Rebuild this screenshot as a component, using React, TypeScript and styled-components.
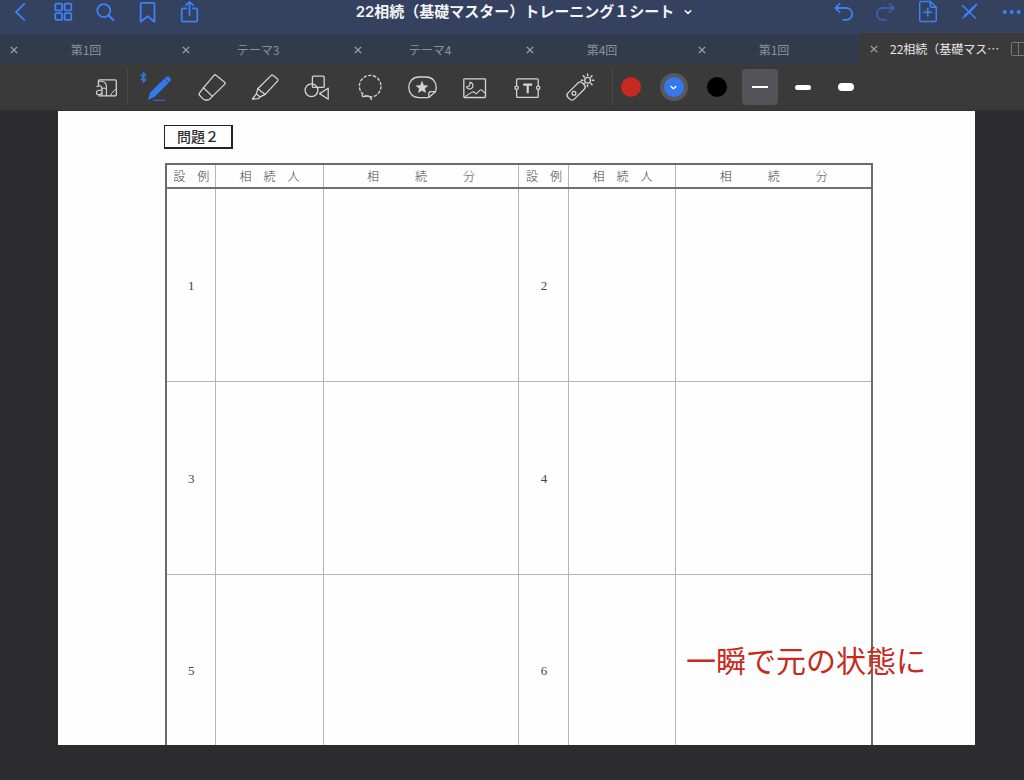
import React from 'react';
import styled, { createGlobalStyle, css } from 'styled-components';

const GlobalStyle = createGlobalStyle`
  * { box-sizing: border-box; }
  body {
    margin: 0;
    background: #2c2c2e;
    font-family: "Noto Sans CJK JP", sans-serif;
  }
  button {
    margin: 0;
    padding: 0;
    border: 0;
    background: none;
    color: inherit;
    font: inherit;
    cursor: pointer;
  }
`;

const Shell = styled.div`
  display: flex;
  flex-direction: column;
  height: 100vh;
  overflow: hidden;
`;

const Header = styled.header`
  display: flex;
  flex: none;
  height: 35px;
  background: #34415f;
  color: #3b82f6;
`;

const IconGroup = styled.div<{ $bleed?: boolean }>`
  display: flex;
  flex: none;
  margin-right: ${(p) => (p.$bleed ? '-8px' : '0')};
`;

const HeaderButton = styled.button<{ $dim?: boolean }>`
  display: flex;
  justify-content: center;
  width: 42px;
  height: 24px;
  opacity: ${(p) => (p.$dim ? 0.5 : 1)};
`;

const Title = styled.h1`
  flex: 1;
  margin: 0;
  padding-left: 16px;
  font: 600 15px/24px Inter, "Noto Sans CJK JP", sans-serif;
  color: #f4f5f8;
  text-align: center;
  white-space: nowrap;
`;

const TitleButton = styled.button`
  display: inline-flex;
  align-items: center;
  gap: 10px;
`;

const Tabs = styled.nav`
  display: grid;
  grid-template-columns: repeat(5, 172fr) 164fr;
  flex: none;
  height: 29px;
  background: #323b4b;
  color: #8b909b;
`;

const Tab = styled.div<{ $active?: boolean }>`
  display: flex;
  align-items: center;
  min-width: 0;
  font-size: 12px;
  line-height: 18px;
  ${(p) =>
    p.$active
      ? css`
          margin-top: -2px;
          background: #3a3a3b;
          color: #e6e6e8;
        `
      : css`
          padding-right: 28px;
        `}
`;

const CloseButton = styled.button`
  display: flex;
  flex: none;
  align-items: center;
  justify-content: center;
  width: 28px;
  height: 28px;
  color: #a3a6ad;
`;

const TabLabel = styled.button<{ $active?: boolean }>`
  flex: 1;
  min-width: 0;
  padding-left: ${(p) => (p.$active ? '2px' : '0')};
  text-align: ${(p) => (p.$active ? 'left' : 'center')};
  white-space: nowrap;
`;

const SplitButton = styled.button`
  display: flex;
  flex: none;
  width: 14px;
  color: #77777b;
`;

const Toolbar = styled.div`
  display: flex;
  flex: none;
  align-items: center;
  height: 47px;
  padding-left: 85px;
  background: #3a3a3b;
  color: #d4d4d6;
  border-bottom: 1px solid #333334;
`;

const ToolButton = styled.button<{ $width: number; $active?: boolean }>`
  display: flex;
  flex: none;
  align-items: center;
  justify-content: center;
  width: ${(p) => p.$width}px;
  height: 36px;
  color: ${(p) => (p.$active ? '#3478f0' : 'inherit')};
`;

const Separator = styled.span<{ $tight?: boolean }>`
  flex: none;
  width: 1px;
  height: 36px;
  margin: ${(p) => (p.$tight ? '0 -4px 0 3px' : '0 4px 0 0')};
  background: #4a4a4c;
`;

const Swatch = styled.span<{ $color: string; $selected?: boolean }>`
  display: flex;
  align-items: center;
  justify-content: center;
  width: ${(p) => (p.$selected ? 28 : 20)}px;
  height: ${(p) => (p.$selected ? 28 : 20)}px;
  border: ${(p) => (p.$selected ? '4px solid #58585c' : '0')};
  border-radius: 50%;
  background: ${(p) => p.$color};
  color: #fff;
`;

const StrokeTile = styled.span<{ $selected?: boolean }>`
  display: flex;
  align-items: center;
  justify-content: center;
  width: 36px;
  height: 36px;
  border-radius: 4px;
  background: ${(p) => (p.$selected ? '#545458' : 'transparent')};
`;

const StrokeBar = styled.span<{ $height: number }>`
  width: 16px;
  height: ${(p) => p.$height}px;
  border-radius: ${(p) => (p.$height > 2 ? 4 : 0)}px;
  background: #fff;
`;

const Canvas = styled.main`
  display: flex;
  flex: 1;
  min-height: 0;
  padding: 0 49px 35px 58px;
`;

const Sheet = styled.article`
  position: relative;
  flex: 1;
  overflow: hidden;
  padding: 14px 102px 0 107px;
  background: #fefefe;
`;

const ProblemTitle = styled.h2`
  width: max-content;
  margin: 0 0 14px -1px;
  padding: 0 12px;
  border: 1px solid #222;
  border-width: 1px 2px 2px 1px;
  font-size: 14px;
  font-weight: 500;
  line-height: 21px;
  color: #2c2c2c;
`;

const AnswerTable = styled.table`
  width: 100%;
  table-layout: fixed;
  border: 2px solid #6a6a6a;
  border-collapse: collapse;
  color: #444;
`;

const Col = styled.col<{ $share: number }>`
  width: ${(p) => p.$share}%;
`;

const HeadCell = styled.th`
  height: 24px;
  padding: 0;
  border: 1px solid #b4b4b4;
  border-bottom: 2px solid #707070;
  font-size: 12px;
  font-weight: 300;
  line-height: 18px;
  white-space: nowrap;
`;

const Cell = styled.td`
  height: 193px;
  padding: 2px 0 0;
  border: 1px solid #b4b4b4;
  font: 13px/18px "Liberation Serif", serif;
  text-align: center;
`;

const Annotation = styled.p`
  position: absolute;
  top: 530px;
  right: 49px;
  margin: 0;
  font-size: 30px;
  line-height: 36px;
  color: #c62a20;
  white-space: nowrap;
`;

const HeaderIcon = ({ children }: { children: React.ReactNode }) => (
  <svg width="28" height="24" viewBox="0 0 28 24" fill="none" stroke="currentColor" strokeWidth="1.8" strokeLinecap="round" strokeLinejoin="round" aria-hidden="true">
    {children}
  </svg>
);

const ToolIcon = ({ children }: { children: React.ReactNode }) => (
  <svg width="32" height="32" viewBox="0 0 32 32" fill="none" stroke="currentColor" strokeWidth="1.3" strokeLinecap="round" strokeLinejoin="round" overflow="visible" aria-hidden="true">
    {children}
  </svg>
);

const Chevron = ({ size }: { size: number }) => (
  <svg width={size} height={size} viewBox="0 0 8 8" fill="none" stroke="currentColor" strokeWidth="1.5" strokeLinecap="round" strokeLinejoin="round" aria-hidden="true">
    <path d="M1.2 2.8 4 5.4 6.8 2.8" />
  </svg>
);

const leftActions = [
  { name: '戻る', icon: <path d="M17.3 4 9 12l8.3 7.8" /> },
  {
    name: '一覧',
    icon: (
      <>
        <rect x="6.3" y="3.6" width="6.7" height="6.7" rx="1" />
        <rect x="15.6" y="3.6" width="6.7" height="6.7" rx="1" />
        <rect x="6.3" y="13.2" width="6.7" height="6.7" rx="1" />
        <rect x="15.6" y="13.2" width="6.7" height="6.7" rx="1" />
      </>
    ),
  },
  {
    name: '検索',
    icon: (
      <>
        <circle cx="12.8" cy="10.6" r="6.5" />
        <path d="m17.6 15.4 4.7 4.6" strokeWidth="2.2" />
      </>
    ),
  },
  { name: 'ブックマーク', icon: <path d="M9 2.8h11.2a1.3 1.3 0 0 1 1.3 1.3v17.7l-6.9-5.6-6.9 5.6V4.1A1.3 1.3 0 0 1 9 2.8Z" /> },
  {
    name: '共有',
    icon: (
      <>
        <path d="M11.3 8.3H8.2a1.5 1.5 0 0 0-1.5 1.5v10.4a1.5 1.5 0 0 0 1.5 1.5h12.6a1.5 1.5 0 0 0 1.5-1.5V9.8a1.5 1.5 0 0 0-1.5-1.5h-3" />
        <path d="M14.5 15.2V2M11 5.2l3.5-3.3L18 5.2" />
      </>
    ),
  },
];

const rightActions = [
  { name: '取り消す', icon: <path d="M10.7 3.8 6.3 8l4.4 4.2M6.3 8h11a5.900 5.900 0 0 1 0 11.800H14" /> },
  { name: 'やり直す', dim: true, icon: <path d="M18.4 3.8 22.8 8l-4.4 4.2M22.8 8h-11a5.900 5.900 0 0 0 0 11.800h3.300" /> },
  {
    name: 'ページを追加',
    icon: (
      <>
        <path d="M17.3 1.6H8.2a1.5 1.5 0 0 0-1.5 1.5v17a1.5 1.5 0 0 0 1.5 1.5h13.6a1.5 1.5 0 0 0 1.5-1.5V7.3l-6-5.7Zm0 0v4.2a1.5 1.5 0 0 0 1.5 1.5h4.5" strokeWidth="1.5" />
        <path d="M14.8 8.6v7.4M11.1 12.3h7.4" strokeWidth="1.6" />
      </>
    ),
  },
  {
    name: '編集を終了',
    icon: (
      <>
        <path d="m7.5 5.4 13 12.9" strokeWidth="1.5" />
        <path d="m8 18.100 2-2.800" strokeWidth="1.4" />
        <path d="M10 15.9 19.4 6.6" strokeWidth="2.4" />
        <path d="m20.4 5.600 1.100-1.100" strokeWidth="1.8" />
      </>
    ),
  },
  {
    name: 'その他',
    icon: (
      <g fill="currentColor" stroke="none">
        <circle cx="7.7" cy="12" r="2" />
        <circle cx="14.7" cy="12" r="2" />
        <circle cx="21.7" cy="12" r="2" />
      </g>
    ),
  },
];

const tools = [
  {
    name: 'ペン',
    active: true,
    icon: (
      <>
        <path d="m-2 4 4.600 4.700L.3 11.200V1.800l2.300 2.300L-2 8.800" />
        <path d="M7.200 21.400 22.600 6.400c1.500-1.300 3.200-1.200 4.300 0 1.200 1.200 1.200 2.700.1 4L12 25.600 4.900 29.200Z" fill="currentColor" stroke="none" />
        <path d="m21.800 7.800 4.200 4.200" stroke="#3a3a3b" strokeWidth=".8" />
        <path d="M10.500 29.300h11" strokeWidth="1.100" />
      </>
    ),
  },
  {
    name: '消しゴム',
    icon: (
      <>
        <path d="M18.2 4.2a1.3 1.3 0 0 1 1.8 0l8.7 7a1.3 1.3 0 0 1 .1 1.9L16.4 25.4 7.4 16.8Z" />
        <path d="m7.400 16.800-4 5.300a1.600 1.600 0 0 0 .1 2.100l4.100 4.200c.5.5 1 .6 1.600.6h2.800c.5 0 1-.2 1.400-.6l3-3" />
      </>
    ),
  },
  {
    name: '蛍光ペン',
    icon: (
      <>
        <path d="M22 4.600a1.600 1.600 0 0 1 2.200-.1l4.100 3.300a1.600 1.600 0 0 1 .2 2.300L16.200 23.400l-7.400-5.600Z" />
        <path d="m8.800 17.800-1.400 5.100 3.800 3 5-2.500M7.400 22.900l-4 5.100 5.700-.3 2.100-1.800" />
      </>
    ),
  },
  {
    name: '図形',
    icon: (
      <>
        <rect x="10.400" y="5.200" width="11.800" height="11.200" rx="1" />
        <circle cx="9.500" cy="19.200" r="6.400" />
        <path d="m17.600 22.600 8.600-5.400v11Z" />
      </>
    ),
  },
  {
    name: '投げ縄',
    icon: (
      <>
        <circle cx="15.200" cy="15.200" r="10.800" strokeDasharray="3.400 1.450" strokeLinecap="butt" />
        <path d="M7.400 23.200c-1 1.800.4 3 2.600 2.200 2.700-1 5.400-.6 6.400 3.100" />
      </>
    ),
  },
  {
    name: 'ステッカー',
    icon: (
      <>
        <path d="M10.800 6h7.400c5.900 0 10 4.500 10 10.200 0 1.500-.2 3.100-.8 4.500l-6.600 5.700c-.8.2-1.700.3-2.600.3h-7.400C4.900 26.700.8 22 .8 16.300S4.900 6 10.800 6Z" />
        <path d="M20.800 26.400v-3.700a2 2 0 0 1 2-2h4.600" />
        <path d="m14 10.600 1.700 3.800 4.100.4-3.100 2.700.9 4-3.600-2.100-3.600 2.100.9-4-3.100-2.700 4.100-.4Z" fill="currentColor" strokeWidth=".5" />
      </>
    ),
  },
  {
    name: '画像',
    icon: (
      <>
        <rect x="2.800" y="7.800" width="21.700" height="18.700" rx=".8" />
        <path d="M8.800 11.200a3.400 3.400 0 1 1-3.400 4.600c2.500.5 4.400-2 3.400-4.600Z" strokeWidth="1.100" />
        <path d="m4 25.600 6.600-4.200c1.300-.8 2.200-.8 3.200.2l1.400 1.200 3.600-3.500c.8-.7 1.500-.7 2.300 0l3.200 3" strokeWidth="1.100" />
      </>
    ),
  },
  {
    name: 'テキスト',
    icon: (
      <>
        <path d="M2.600 14.400V8.800a1 1 0 0 1 1-1h19.600a1 1 0 0 1 1 1v5.600M2.600 19.200v6.200a1 1 0 0 0 1 1h19.600a1 1 0 0 0 1-1v-6.200" />
        <circle cx="2.600" cy="16.800" r="1.700" />
        <circle cx="24.200" cy="16.800" r="1.700" />
        <path d="M9.200 13.600h9M13.700 13.600v8.600" strokeWidth="2.200" strokeLinecap="butt" />
      </>
    ),
  },
  {
    name: 'レーザーポインター',
    icon: (
      <>
        <rect x="-1.100" y="15.600" width="20.400" height="8.800" rx="3.200" transform="rotate(-45 9.200 20)" />
        <circle cx="7" cy="22.300" r="1.900" />
        <circle cx="20.600" cy="9.200" r="2.900" />
        <path d="M20.600 3v1.500M20.600 13.900v1.500M14.400 9.200h1.500M25.300 9.200h1.500M16.200 4.800l1.100 1.100M23.900 12.500l1.100 1.100M25 4.800l-1.100 1.100M17.300 12.500l-.4.400" strokeWidth="1.500" />
      </>
    ),
  },
];

const ReadOnlyIcon = () => (
  <ToolIcon>
    <path d="M8.400 14V10a1.200 1.200 0 0 1 1.200-1.200h15.500A1.200 1.200 0 0 1 26.300 10v13.600a1.200 1.200 0 0 1-1.200 1.200H8.800" />
    <path d="M9 10.200h2.200a5.200 5.200 0 0 1 5.200 5.200v9.200M12 17.200h4.400" strokeWidth="1.100" />
    <path d="M7 15.600c2.300-1.500 5-.8 5 1.800v6.800M12 19.200c-3-.3-5.600.3-5.600 2.600 0 2.700 4.200 2.600 5.600-.4" strokeWidth="1.200" />
    <path d="m20.800 24.400.9-2.200 3.600-3.600.8-.2" strokeWidth="1" />
  </ToolIcon>
);

const CloseIcon = () => (
  <svg width="8" height="8" viewBox="0 0 8 8" fill="none" stroke="currentColor" strokeWidth="1.2" aria-hidden="true">
    <path d="m.8.8 6.400 6.400M7.200.8.8 7.200" />
  </svg>
);

const swatches = [
  { name: '赤', color: '#c6291e' },
  { name: '青', color: '#3478f0', selected: true },
  { name: '黒', color: '#000' },
];

const strokes = [
  { name: '細い線', height: 2, selected: true },
  { name: '中くらいの線', height: 5 },
  { name: '太い線', height: 8 },
];

const columnShares = [7.08, 15.16, 27.76, 7.08, 15.16, 27.76];
const headings = ['設　例', '相　続　人', '相　　　続　　　分'];
const rows = [
  [1, 2],
  [3, 4],
  [5, 6],
];

export default function App() {
  return (
    <Shell lang="ja">
      <GlobalStyle />
      <Header>
        <IconGroup>
          {leftActions.map((a) => (
            <HeaderButton key={a.name} aria-label={a.name}>
              <HeaderIcon>{a.icon}</HeaderIcon>
            </HeaderButton>
          ))}
        </IconGroup>
        <Title>
          <TitleButton>
            22相続（基礎マスター）トレーニング１シート
            <Chevron size={8} />
          </TitleButton>
        </Title>
        <IconGroup $bleed>
          {rightActions.map((a) => (
            <HeaderButton key={a.name} aria-label={a.name} $dim={a.dim}>
              <HeaderIcon>{a.icon}</HeaderIcon>
            </HeaderButton>
          ))}
        </IconGroup>
      </Header>

      <Tabs>
        {['第1回', 'テーマ3', 'テーマ4', '第4回', '第1回'].map((label, i) => (
          <Tab key={i}>
            <CloseButton aria-label="タブを閉じる">
              <CloseIcon />
            </CloseButton>
            <TabLabel>{label}</TabLabel>
          </Tab>
        ))}
        <Tab $active>
          <CloseButton aria-label="タブを閉じる">
            <CloseIcon />
          </CloseButton>
          <TabLabel $active aria-current="page">
            22相続（基礎マス…
          </TabLabel>
          <SplitButton aria-label="分割表示">
            <svg width="14" height="16" viewBox="0 0 14 16" fill="none" stroke="currentColor" aria-hidden="true">
              <path d="M15 1.5H2.5a1 1 0 0 0-1 1v11a1 1 0 0 0 1 1H15M8.500 1.500v13" />
            </svg>
          </SplitButton>
        </Tab>
      </Tabs>

      <Toolbar>
        <ToolButton $width={42} aria-label="閲覧モード">
          <ReadOnlyIcon />
        </ToolButton>
        <Separator />
        {tools.map((t) => (
          <ToolButton key={t.name} $width={53} $active={t.active} aria-label={t.name}>
            <ToolIcon>{t.icon}</ToolIcon>
          </ToolButton>
        ))}
        <Separator $tight />
        {swatches.map((s) => (
          <ToolButton key={s.name} $width={43} aria-label={s.name}>
            <Swatch $color={s.color} $selected={s.selected}>
              {s.selected && <Chevron size={7} />}
            </Swatch>
          </ToolButton>
        ))}
        {strokes.map((s) => (
          <ToolButton key={s.name} $width={43} aria-label={s.name}>
            <StrokeTile $selected={s.selected}>
              <StrokeBar $height={s.height} />
            </StrokeTile>
          </ToolButton>
        ))}
      </Toolbar>

      <Canvas>
        <Sheet>
          <ProblemTitle>問題２</ProblemTitle>
          <AnswerTable>
            <colgroup>
              {columnShares.map((share, i) => (
                <Col key={i} $share={share} />
              ))}
            </colgroup>
            <thead>
              <tr>
                {[...headings, ...headings].map((h, i) => (
                  <HeadCell key={i} scope="col">
                    {h}
                  </HeadCell>
                ))}
              </tr>
            </thead>
            <tbody>
              {rows.map(([left, right]) => (
                <tr key={left}>
                  <Cell>{left}</Cell>
                  <Cell />
                  <Cell />
                  <Cell>{right}</Cell>
                  <Cell />
                  <Cell />
                </tr>
              ))}
            </tbody>
          </AnswerTable>
          <Annotation>一瞬で元の状態に</Annotation>
        </Sheet>
      </Canvas>
    </Shell>
  );
}
